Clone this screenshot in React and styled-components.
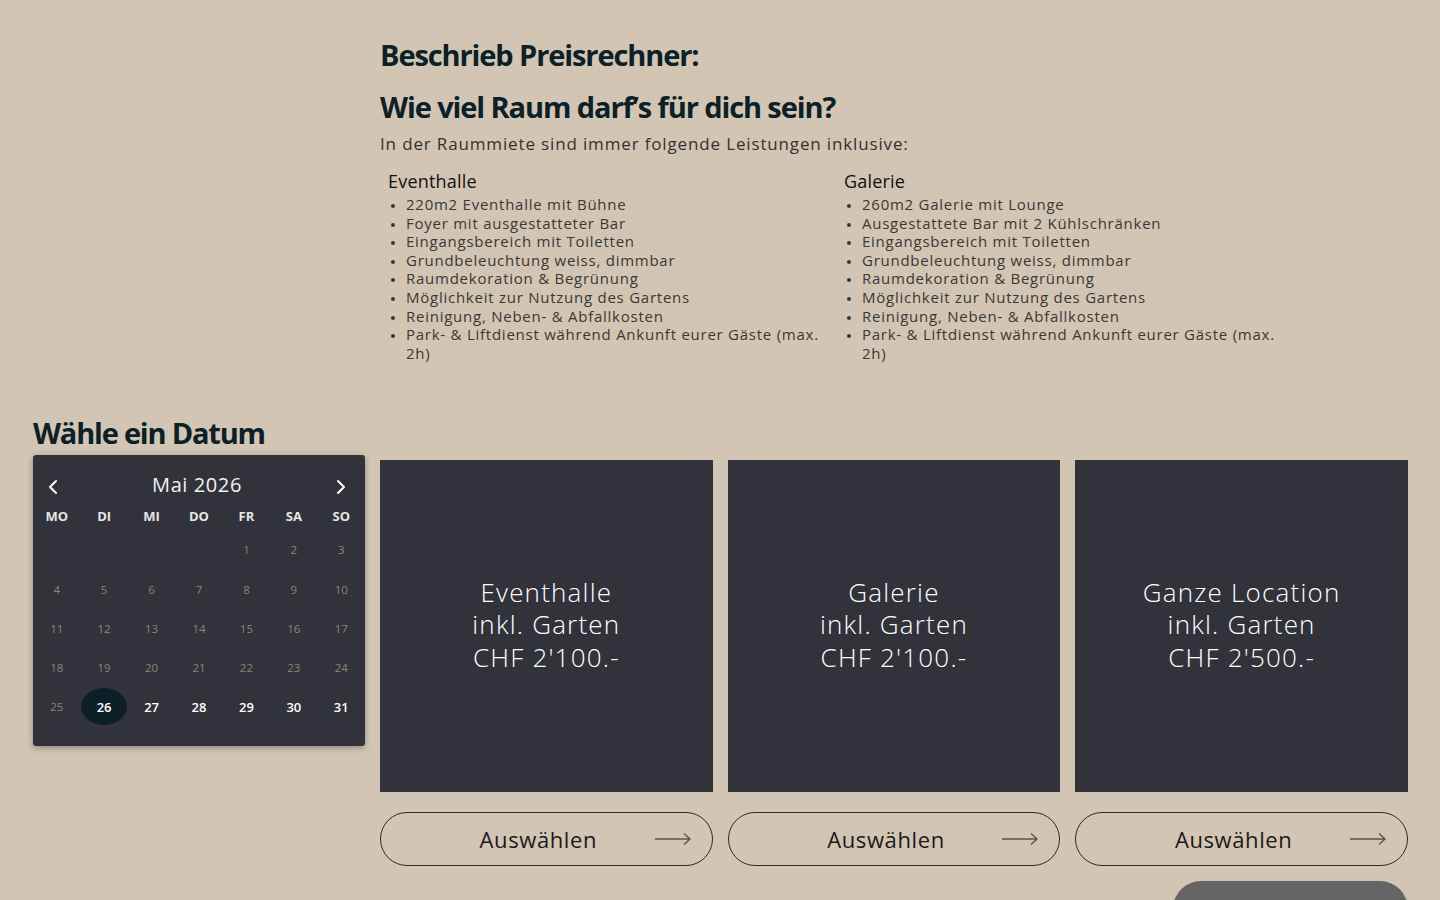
import React from "react";
import styled, { createGlobalStyle } from "styled-components";

const GlobalStyle = createGlobalStyle`
  html, body {
    margin: 0;
    padding: 0;
    background: #d2c5b4;
  }
  body {
    font-family: "Open Sans", "Noto Sans", sans-serif;
    color: #1e1e1e;
  }
  * { box-sizing: border-box; }
`;

const rooms = [
  {
    title: "Eventhalle",
    items: [
      "220m2 Eventhalle mit Bühne",
      "Foyer mit ausgestatteter Bar",
      "Eingangsbereich mit Toiletten",
      "Grundbeleuchtung weiss, dimmbar",
      "Raumdekoration & Begrünung",
      "Möglichkeit zur Nutzung des Gartens",
      "Reinigung, Neben- & Abfallkosten",
      "Park- & Liftdienst während Ankunft eurer Gäste (max. 2h)",
    ],
  },
  {
    title: "Galerie",
    items: [
      "260m2 Galerie mit Lounge",
      "Ausgestattete Bar mit 2 Kühlschränken",
      "Eingangsbereich mit Toiletten",
      "Grundbeleuchtung weiss, dimmbar",
      "Raumdekoration & Begrünung",
      "Möglichkeit zur Nutzung des Gartens",
      "Reinigung, Neben- & Abfallkosten",
      "Park- & Liftdienst während Ankunft eurer Gäste (max. 2h)",
    ],
  },
];

const offers = [
  { name: "Eventhalle", price: "CHF 2'100.-" },
  { name: "Galerie", price: "CHF 2'100.-" },
  { name: "Ganze Location", price: "CHF 2'500.-" },
];

const weekdays = ["MO", "DI", "MI", "DO", "FR", "SA", "SO"];

const ArrowRight = () => (
  <svg width="38" height="14" viewBox="0 0 38 14" fill="none">
    <path d="M1 7H36M30 1.5L36 7L30 12.5" stroke="#5a5650" strokeWidth="1.4" />
  </svg>
);

const Chevron = ({ dir }) => (
  <svg width="14" height="16" viewBox="0 0 14 16" fill="none">
    <path
      d={dir === "left" ? "M10 2L4 8L10 14" : "M4 2L10 8L4 14"}
      stroke="#fff"
      strokeWidth="2"
      strokeLinecap="round"
      strokeLinejoin="round"
    />
  </svg>
);

const Calendar = () => {
  const cells = [];
  for (let i = 0; i < 4; i++) cells.push(null);
  for (let d = 1; d <= 31; d++) cells.push(d);
  return (
    <CalendarBox>
      <CalendarHead>
        <NavButton><Chevron dir="left" /></NavButton>
        <MonthLabel>Mai 2026</MonthLabel>
        <NavButton><Chevron dir="right" /></NavButton>
      </CalendarHead>
      <DayGrid>
        {weekdays.map((w) => (
          <Weekday key={w}>{w}</Weekday>
        ))}
        {cells.map((d, i) => (
          <DayCell key={i}>
            {d && (
              <Day $past={d < 26} $selected={d === 26}>
                {d}
              </Day>
            )}
          </DayCell>
        ))}
      </DayGrid>
    </CalendarBox>
  );
};

const App = () => {
  return (
    <>
      <GlobalStyle />
      <Page>
        <Intro>
          <Title>Beschrieb Preisrechner:</Title>
          <Title>Wie viel Raum darf’s für dich sein?</Title>
          <Lead>In der Raummiete sind immer folgende Leistungen inklusive:</Lead>
          <RoomGrid>
            {rooms.map((r) => (
              <RoomCol key={r.title}>
                <RoomTitle>{r.title}</RoomTitle>
                <RoomList>
                  {r.items.map((it) => (
                    <li key={it}>{it}</li>
                  ))}
                </RoomList>
              </RoomCol>
            ))}
          </RoomGrid>
        </Intro>
        <Picker>
          <DateCol>
            <SubTitle>Wähle ein Datum</SubTitle>
            <Calendar />
          </DateCol>
          <OfferGrid>
            {offers.map((o) => (
              <Offer key={o.name}>
                <OfferCard>
                  {o.name}
                  <br />
                  inkl. Garten
                  <br />
                  {o.price}
                </OfferCard>
                <SelectButton>
                  <span>Auswählen</span>
                  <ArrowWrap>
                    <ArrowRight />
                  </ArrowWrap>
                </SelectButton>
              </Offer>
            ))}
            <NextBar />
          </OfferGrid>
        </Picker>
      </Page>
    </>
  );
};

export default App;

const Page = styled.div`
  width: 1440px;
  height: 900px;
  overflow: hidden;
  padding: 36px 32px 0 33px;
`;

const Intro = styled.section`
  margin-left: 347px;
  width: 1028px;
`;

const Title = styled.h1`
  margin: 0 0 14px;
  font-size: 29px;
  line-height: 38px;
  font-weight: 700;
  letter-spacing: -1.1px;
  color: #0b2127;
`;

const Lead = styled.p`
  margin: -8px 0 14px;
  font-size: 17px;
  line-height: 24px;
  font-weight: 400;
  letter-spacing: 0.85px;
  color: #333230;
`;

const RoomGrid = styled.div`
  display: grid;
  grid-template-columns: 456px 456px;
  padding-left: 8px;
`;

const RoomCol = styled.div`
  padding-right: 12px;
`;

const RoomTitle = styled.div`
  font-size: 18px;
  line-height: 22px;
  letter-spacing: 0.2px;
  color: #111;
  margin-bottom: 3px;
`;

const RoomList = styled.ul`
  margin: 0;
  padding-left: 18px;
  font-size: 15px;
  line-height: 18.6px;
  letter-spacing: 0.75px;
  color: #3a3835;

  li::marker {
    font-size: 12px;
  }
`;

const Picker = styled.section`
  display: grid;
  grid-template-columns: 332px 1028px;
  column-gap: 15px;
  margin-top: 53px;
`;

const DateCol = styled.div`
  display: flex;
  flex-direction: column;
`;

const SubTitle = styled.h2`
  margin: 0 0 4px;
  font-size: 29px;
  line-height: 36px;
  font-weight: 700;
  letter-spacing: -1.2px;
  color: #0b2127;
`;

const CalendarBox = styled.div`
  width: 332px;
  height: 291px;
  background: #32323a;
  border-radius: 3px;
  box-shadow: 0 2px 6px rgba(0, 0, 0, 0.3);
  padding-top: 14px;
`;

const CalendarHead = styled.div`
  display: flex;
  align-items: center;
  justify-content: space-between;
  padding: 0 17px 0 13px;
  height: 30px;
`;

const NavButton = styled.div`
  width: 14px;
  height: 16px;
  margin-top: 6px;
  display: flex;
`;

const MonthLabel = styled.div`
  font-size: 20px;
  font-weight: 400;
  letter-spacing: 0.6px;
  color: #f2f2f2;
`;

const DayGrid = styled.div`
  display: grid;
  grid-template-columns: repeat(7, 1fr);
  grid-template-rows: 26px 41px repeat(5, 39px);
  margin-top: 4px;
`;

const Weekday = styled.div`
  display: flex;
  align-items: center;
  justify-content: center;
  font-size: 13px;
  font-weight: 700;
  color: #e6e6e6;
`;

const DayCell = styled.div`
  display: flex;
  align-items: center;
  justify-content: center;
`;

const Day = styled.div`
  width: 46px;
  height: 37px;
  border-radius: 50%;
  display: flex;
  align-items: center;
  justify-content: center;
  font-size: ${({ $past }) => ($past ? "11.5px" : "13px")};
  font-weight: ${({ $past }) => ($past ? 400 : 600)};
  color: ${({ $past }) => ($past ? "#8e8576" : "#fff")};
  background: ${({ $selected }) => ($selected ? "#0b1f26" : "transparent")};
`;

const OfferGrid = styled.div`
  display: grid;
  grid-template-columns: repeat(3, 1fr);
  column-gap: 15px;
  padding-top: 45px;
`;

const Offer = styled.div`
  display: flex;
  flex-direction: column;
  gap: 20px;
`;

const OfferCard = styled.div`
  height: 332px;
  background: #32323a;
  display: flex;
  align-items: center;
  justify-content: center;
  text-align: center;
  padding-bottom: 4px;
  font-size: 26px;
  line-height: 32.5px;
  font-weight: 300;
  letter-spacing: 1.2px;
  color: #fff;
`;

const SelectButton = styled.button`
  position: relative;
  height: 54px;
  border: 1px solid #2a2a2a;
  border-radius: 27px;
  background: transparent;
  font-family: inherit;
  font-size: 22px;
  font-weight: 400;
  letter-spacing: 0.6px;
  color: #1a1a1a;
  display: flex;
  align-items: center;
  justify-content: center;
  padding-right: 22px;
`;

const ArrowWrap = styled.span`
  position: absolute;
  right: 20px;
  top: 50%;
  transform: translateY(-50%);
  display: flex;
`;

const NextBar = styled.div`
  grid-column: 3;
  justify-self: end;
  width: 235px;
  height: 40px;
  margin-top: 15px;
  background: #646464;
  border-radius: 28px 28px 0 0;
`;
